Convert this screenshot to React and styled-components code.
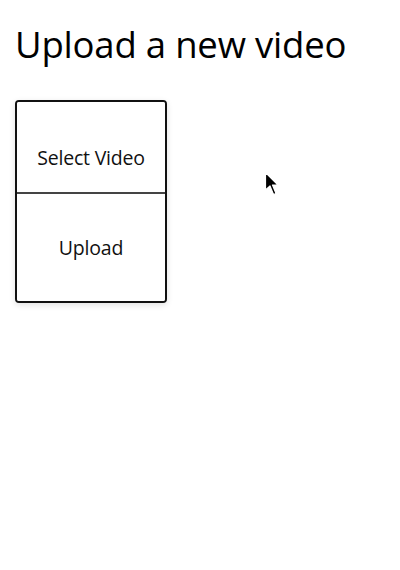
import React from 'react';
import styled, { createGlobalStyle } from 'styled-components';

const GlobalStyle = createGlobalStyle`
  html, body {
    margin: 0;
    padding: 0;
    background: #ffffff;
  }
  body {
    font-family: "Open Sans", "Noto Sans", sans-serif;
    color: #000;
  }
`;

const Page = styled.div`
  position: relative;
  width: 400px;
  height: 570px;
  padding: 0 15px;
  box-sizing: border-box;
`;

const Title = styled.h1`
  margin: 0;
  padding-top: 20px;
  font-size: 36.5px;
  font-weight: 400;
  line-height: 48px;
  letter-spacing: -0.2px;
`;

const UploadCard = styled.div`
  margin-top: 32px;
  width: 152px;
  display: flex;
  flex-direction: column;
  border: 2px solid #111;
  border-radius: 4px;
  box-shadow: 0 2px 6px rgba(0, 0, 0, 0.12);
  box-sizing: border-box;
  overflow: hidden;
`;

const CardButton = styled.button`
  height: ${p => p.$h}px;
  border: none;
  border-top: ${p => (p.$divided ? '2px solid #444' : 'none')};
  background: #fff;
  font-family: "Open Sans", "Noto Sans", sans-serif;
  font-size: 19.5px;
  letter-spacing: -0.2px;
  color: #111;
  padding: ${p => p.$offset}px 0 0;
  cursor: pointer;
`;

const Cursor = styled.svg`
  position: absolute;
  left: 264px;
  top: 171px;
  width: 17px;
  height: 27px;
`;

export default function App() {
  return (
    <>
      <GlobalStyle />
      <Page>
        <Title>Upload a new video</Title>
        <UploadCard>
          <CardButton $h={90} $offset={21}>Select Video</CardButton>
          <CardButton $h={109} $offset={0} $divided>Upload</CardButton>
        </UploadCard>
        <Cursor viewBox="0 0 17 27">
          <path d="M1.5 1.5 L1.5 19 L6 15 L9.5 23.5 L12 22.5 L8.5 14 L14 14 Z" fill="#000" stroke="#fff" strokeWidth="1.2" strokeLinejoin="round" />
        </Cursor>
      </Page>
    </>
  );
}
